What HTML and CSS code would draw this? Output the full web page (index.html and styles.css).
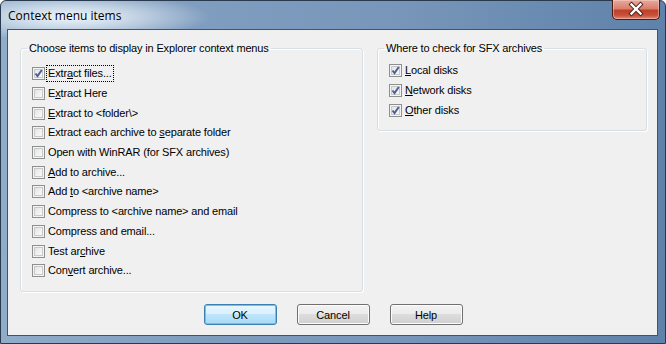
FILE: index.html
```html
<!DOCTYPE html>
<html>
<head>
<meta charset="utf-8">
<link rel="stylesheet" href="styles.css">
</head>
<body>
<div class="window">
  <div class="titlebar">
    <div class="title">Context menu items</div>
    <div class="close">
      <svg width="48" height="20" viewBox="0 0 48 20">
        <path d="M19.5 5.5 L28.5 14.5 M28.5 5.5 L19.5 14.5" stroke="#4a1e1a" stroke-width="4.2" stroke-linecap="square"/>
        <path d="M19.5 5.5 L28.5 14.5 M28.5 5.5 L19.5 14.5" stroke="#ffffff" stroke-width="2.4" stroke-linecap="square"/>
      </svg>
    </div>
  </div>
  <div class="client">
    <div class="groups">
      <fieldset class="group group-main">
        <legend>Choose items to display in Explorer context menus</legend>
        <div class="item"><span class="cb"><svg class="tick" width="13" height="13" viewBox="0 0 13 13"><path d="M3.5 6.5 L5.5 9 L9.8 3" fill="none" stroke="#4b5e99" stroke-width="2"/></svg></span><span class="label focus">Extr<u>a</u>ct files...</span></div>
        <div class="item"><span class="cb"></span><span class="label">E<u>x</u>tract Here</span></div>
        <div class="item"><span class="cb"></span><span class="label"><u>E</u>xtract to &lt;folder\&gt;</span></div>
        <div class="item"><span class="cb"></span><span class="label">Extract each archive to <u>s</u>eparate folder</span></div>
        <div class="item"><span class="cb"></span><span class="label">Open with WinRAR (for SFX archives)</span></div>
        <div class="item"><span class="cb"></span><span class="label"><u>A</u>dd to archive...</span></div>
        <div class="item"><span class="cb"></span><span class="label">Add <u>t</u>o &lt;archive name&gt;</span></div>
        <div class="item"><span class="cb"></span><span class="label">Compress to &lt;archive name&gt; and email</span></div>
        <div class="item"><span class="cb"></span><span class="label">Compress and email...</span></div>
        <div class="item"><span class="cb"></span><span class="label">Test ar<u>c</u>hive</span></div>
        <div class="item"><span class="cb"></span><span class="label">Con<u>v</u>ert archive...</span></div>
      </fieldset>
      <fieldset class="group group-sfx">
        <legend>Where to check for SFX archives</legend>
        <div class="item"><span class="cb"><svg class="tick" width="13" height="13" viewBox="0 0 13 13"><path d="M3.5 6.5 L5.5 9 L9.8 3" fill="none" stroke="#4b5e99" stroke-width="2"/></svg></span><span class="label"><u>L</u>ocal disks</span></div>
        <div class="item"><span class="cb"><svg class="tick" width="13" height="13" viewBox="0 0 13 13"><path d="M3.5 6.5 L5.5 9 L9.8 3" fill="none" stroke="#4b5e99" stroke-width="2"/></svg></span><span class="label"><u>N</u>etwork disks</span></div>
        <div class="item"><span class="cb"><svg class="tick" width="13" height="13" viewBox="0 0 13 13"><path d="M3.5 6.5 L5.5 9 L9.8 3" fill="none" stroke="#4b5e99" stroke-width="2"/></svg></span><span class="label"><u>O</u>ther disks</span></div>
      </fieldset>
    </div>
    <div class="buttons">
      <button class="btn btn-default">OK</button>
      <button class="btn">Cancel</button>
      <button class="btn">Help</button>
    </div>
  </div>
</div>
</body>
</html>
```
FILE: styles.css
```css
html, body {
  margin: 0;
  padding: 0;
}
body {
  width: 666px;
  height: 344px;
  overflow: hidden;
  font-family: "Liberation Sans", Arial, sans-serif;
  font-size: 11px;
  letter-spacing: -0.15px;
  color: #000;
}
.window {
  width: 666px;
  height: 344px;
  box-sizing: border-box;
  border: 1px solid #2a3a4e;
  border-radius: 6px 6px 0 0;
  background:
    radial-gradient(ellipse 140px 24px at 70px 16px, rgba(240,246,252,1), rgba(240,246,252,0.6) 45%, rgba(240,246,252,0) 100%),
    linear-gradient(90deg, #8facc9 0%, #7f9dbf 30%, #7796b9 60%, #5f82aa 100%);
  display: flex;
  flex-direction: column;
}
.titlebar {
  height: 28px;
  display: flex;
  align-items: flex-start;
  justify-content: space-between;
}
.title {
  margin: 7px 0 0 7px;
  font-family: "Open Sans", "Noto Sans", sans-serif;
  font-size: 12px;
  letter-spacing: 0;
  line-height: 16px;
  color: #000;
}
.close {
  width: 48px;
  height: 20px;
  margin: -1px 5px 0 0;
  box-sizing: border-box;
  border: 1px solid #4c1a12;
  border-top: none;
  border-radius: 0 0 5px 5px;
  background: linear-gradient(180deg, #e9a99c 0%, #d8806c 45%, #c0402a 55%, #c8503a 80%, #e08a6c 100%);
  box-shadow: inset 0 0 0 1px rgba(255,220,210,0.45);
}
.close svg {
  display: block;
  margin: -1px 0 0 -1px;
}
.client {
  margin: 0 7px 7px 6px;
  flex: 1;
  background: #f0f0f0;
  border: 1px solid #3e556f;
  display: flex;
  flex-direction: column;
}
.groups {
  display: flex;
  align-items: flex-start;
  gap: 14px;
  padding: 11px 0 0 12px;
}
.group {
  margin: 0;
  padding: 0 0 0 11px;
  border: 1px solid #d5dfe5;
  border-radius: 3px;
  box-shadow: inset 1px 1px 0 #ffffff, 1px 1px 0 #ffffff;
  box-sizing: border-box;
  min-width: 0;
}
.group legend {
  padding: 0 2px;
  margin-left: -5px;
  line-height: 14px;
  color: #000;
}
.group-main {
  width: 343px;
  height: 251px;
  padding-top: 9px;
}
.group-sfx {
  width: 270px;
  height: 90px;
  padding-top: 6px;
}
.item {
  height: 19.7px;
  display: flex;
  align-items: center;
}
.cb {
  width: 13px;
  height: 13px;
  box-sizing: border-box;
  border: 1px solid #8e8f8f;
  background: linear-gradient(135deg, #dcdcdc 0%, #f2f2f2 55%, #fbfbfb 100%);
  box-shadow: inset 0 0 0 1px #f4f4f4, inset 0 0 0 2px #c9c9c9;
  position: relative;
  flex: none;
}
.tick {
  position: absolute;
  left: -1px;
  top: -1px;
}
.label {
  margin-left: 2px;
  padding: 0 1px;
  line-height: 15px;
  white-space: nowrap;
}
.label u {
  text-decoration: underline;
  text-underline-offset: 1px;
}
.focus {
  outline: 1px dotted #000;
  outline-offset: 0;
}
.buttons {
  margin-top: auto;
  display: flex;
  justify-content: center;
  gap: 20px;
  padding: 0 0 10px 1px;
}
.btn {
  width: 73px;
  height: 21px;
  box-sizing: border-box;
  border: 1px solid #707070;
  border-radius: 3px;
  font-family: inherit;
  font-size: 11px;
  letter-spacing: inherit;
  color: #000;
  padding: 0;
  background: linear-gradient(180deg, #f2f2f2 0%, #ebebeb 49%, #dddddd 50%, #cfcfcf 100%);
  box-shadow: inset 0 0 0 1px #fcfcfc;
}
.btn-default {
  border-color: #3c7fb1;
  background: linear-gradient(180deg, #eaf6fd 0%, #d9f0fc 49%, #bee6fd 50%, #a7d9f5 100%);
  box-shadow: inset 0 0 0 1px #48d2ff;
}
```
